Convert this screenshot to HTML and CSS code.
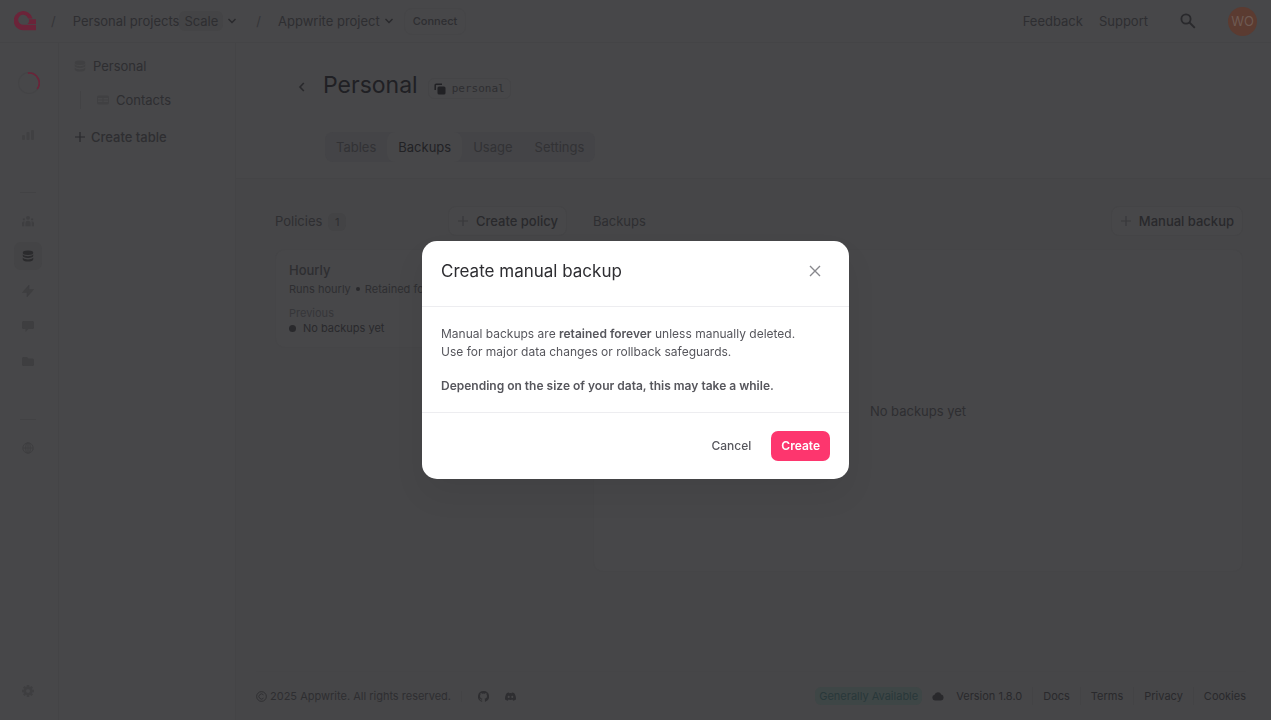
FILE: index.html
```html
<!DOCTYPE html>
<html lang="en">
<head>
<meta charset="utf-8">
<title>Backups - Personal - Appwrite</title>
<link rel="stylesheet" href="styles.css">
</head>
<body>
<svg class="defs" aria-hidden="true">
  <symbol id="database" viewBox="0 0 16 16"><ellipse cx="8" cy="3.6" rx="7" ry="2.9"/><path d="M1 6c1.500 1.600 4 2.200 7 2.200S13.500 7.600 15 6v1.800c0 1.700-3 3-7 3s-7-1.300-7-3zM1 10.300c1.500 1.600 4 2.200 7 2.200s5.500-.6 7-2.200v1.900c0 1.800-3 3.100-7 3.100s-7-1.300-7-3.100z"/></symbol>
  <symbol id="chevron" viewBox="0 0 10 10"><path d="M1.500 3l3.500 3.500L8.500 3" fill="none" stroke="currentColor" stroke-width="1.400"/></symbol>
  <symbol id="plus" viewBox="0 0 12 12"><path d="M6 1v10M1 6h10" fill="none" stroke="currentColor" stroke-width="1.200"/></symbol>
</svg>
<div class="app">
  <header class="topbar">
    <a class="logo" href="#" aria-label="Appwrite"><svg viewBox="0 0 22 20"><path d="M22 13.700V19.300H9.700A9.600 9.600 0 1 1 18.600 7.400H14A5 5 0 1 0 9.700 13.700Z"/><path d="M15 8.200H22v4.700h-8.400a5 5 0 0 0 1.400-4.700z"/></svg></a>
    <span class="slash">/</span>
    <button class="crumb" type="button">Personal projects <span class="plan">Scale</span><svg class="chev"><use href="#chevron"/></svg></button>
    <span class="slash second">/</span>
    <button class="crumb project" type="button">Appwrite project<svg class="chev"><use href="#chevron"/></svg></button>
    <button class="connect" type="button">Connect</button>
    <nav class="top-actions">
      <button type="button">Feedback</button>
      <button type="button">Support</button>
      <button class="search" type="button" aria-label="Search"><svg viewBox="0 0 16 16"><circle cx="6" cy="6" r="4.600"/><path d="M9.500 9.500l5.300 5.300"/></svg></button>
      <button class="avatar" type="button">WO</button>
    </nav>
  </header>

  <nav class="rail" aria-label="Project">
    <svg class="spinner" viewBox="0 0 20 20"><circle cx="10" cy="10" r="9.500"/><path d="M9 1a9.200 9.200 0 0 1 8.500 14.500"/></svg>
    <a class="overview" href="#" aria-label="Overview"><svg viewBox="0 0 12 12"><rect x="0" y="6" width="3" height="5" rx="1"/><rect x="4.500" y="3" width="3" height="8" rx="1"/><rect x="9" y="1" width="3" height="10" rx="1"/></svg></a>
    <hr class="rule-build">
    <div class="rail-group">
      <a href="#" aria-label="Auth"><svg viewBox="0 0 14 12"><circle cx="7" cy="2.300" r="2.200"/><circle cx="2.200" cy="4" r="1.300"/><circle cx="11.800" cy="4" r="1.300"/><path d="M4 12V8.800a3 3 0 0 1 6 0V12zM0 12V8.500C0 7 1.500 6.300 3 6.700 2.500 8 2.600 10 2.600 12zM14 12V8.500c0-1.500-1.500-2.200-3-1.800.5 1.300.4 3.300.4 5.300z"/></svg></a>
      <a class="active" href="#" aria-label="Databases"><svg><use href="#database"/></svg></a>
      <a href="#" aria-label="Functions"><svg viewBox="0 0 12 12"><path d="M7 0v4.500h4.500L5 12V7.500H.5z" stroke="currentColor" stroke-width=".6" stroke-linejoin="round"/></svg></a>
      <a href="#" aria-label="Messaging"><svg viewBox="0 0 12 12"><path d="M1.500 1h9A1.500 1.500 0 0 1 12 2.500v5A1.500 1.500 0 0 1 10.500 9H6.300L3.500 12V9h-2A1.500 1.500 0 0 1 0 7.500v-5A1.500 1.500 0 0 1 1.500 1z"/></svg></a>
      <a href="#" aria-label="Storage"><svg viewBox="0 0 12 12"><path d="M1.500 2H5l1.500 1.400h4A1.500 1.500 0 0 1 12 4.900v4.600a1.500 1.500 0 0 1-1.500 1.500h-9A1.500 1.500 0 0 1 0 9.500v-6A1.500 1.500 0 0 1 1.500 2z"/></svg></a>
    </div>
    <hr class="rule-deploy">
    <a class="sites" href="#" aria-label="Sites"><svg viewBox="0 0 12 12" class="line"><circle cx="6" cy="6" r="5.200"/><ellipse cx="6" cy="6" rx="2.300" ry="5.200"/><path d="M1 6h10M6 1v10"/></svg></a>
    <a class="settings" href="#" aria-label="Settings"><svg viewBox="0 0 12 12" class="gear"><circle cx="6" cy="6" r="3.200"/><path d="M6 0v2M6 10v2M0 6h2M10 6h2M1.800 1.800l1.400 1.400M8.800 8.800l1.400 1.400M10.200 1.800L8.800 3.200M3.200 8.800l-1.400 1.400"/></svg></a>
  </nav>

  <aside class="tree">
    <a href="#"><svg class="tree-icon"><use href="#database"/></svg>Personal</a>
    <a class="child" href="#"><svg class="tree-icon" viewBox="0 0 12 12"><path fill-rule="evenodd" d="M2 1.500h8a2 2 0 0 1 2 2v5a2 2 0 0 1-2 2H2a2 2 0 0 1-2-2v-5a2 2 0 0 1 2-2zM1 4v1.500h4.500V4zm5.500 0v1.500H11V4zM1 6.500V8h4.500V6.500zm5.500 0V8H11V6.500z"/></svg>Contacts</a>
    <button class="create-table" type="button"><svg><use href="#plus"/></svg>Create table</button>
  </aside>

  <main>
    <section class="heading">
      <div class="title-row">
        <a class="back" href="#" aria-label="Back"><svg viewBox="0 0 10 10"><path d="M6.800 1L3 5l3.800 4"/></svg></a>
        <h1>Personal</h1>
        <button class="id-chip" type="button"><svg viewBox="0 0 12 12"><path d="M1.200 7V2.200a1 1 0 0 1 1-1H8" fill="none" stroke="currentColor" stroke-width="1.500"/><rect x="3.500" y="3.500" width="8" height="8" rx="1.500"/></svg>personal</button>
      </div>
      <nav class="tabs"><a href="#">Tables</a><a class="selected" href="#">Backups</a><a href="#">Usage</a><a href="#">Settings</a></nav>
    </section>
    <div class="columns">
      <section class="policies">
        <div class="section-head"><h2>Policies <span class="count">1</span></h2><button class="outlined" type="button"><svg><use href="#plus"/></svg>Create policy</button></div>
        <article class="policy">
          <h3>Hourly</h3>
          <p>Runs hourly<i class="dot"></i>Retained forever</p>
          <p class="previous">Previous</p>
          <p class="status"><i class="status-dot"></i>No backups yet</p>
        </article>
      </section>
      <section class="backups">
        <div class="section-head"><h2>Backups</h2><button class="outlined" type="button"><svg><use href="#plus"/></svg>Manual backup</button></div>
        <div class="empty">No backups yet</div>
      </section>
    </div>
    <footer>
      <span class="copyright"><svg viewBox="0 0 12 12"><circle cx="6" cy="6" r="5.300"/><path d="M8.200 4.300a2.800 2.800 0 1 0 0 3.400"/></svg>2025 Appwrite. All rights reserved.</span>
      <span class="social">
        <a href="#" aria-label="GitHub"><svg viewBox="0 0 16 16"><path d="M8 0a8 8 0 0 0-2.500 15.600c.4.100.5-.2.500-.4v-1.500c-2.200.5-2.700-1-2.700-1-.4-.9-.9-1.200-.9-1.200-.7-.5.1-.5.100-.5.800.1 1.200.8 1.200.8.700 1.300 1.900.9 2.300.7.100-.5.300-.9.500-1.100-1.800-.2-3.600-.9-3.600-4 0-.9.300-1.600.8-2.200-.1-.2-.4-1 .1-2.100 0 0 .7-.2 2.200.8a7.700 7.700 0 0 1 4 0c1.500-1 2.200-.8 2.200-.8.500 1.100.2 1.900.1 2.100.5.600.8 1.300.8 2.200 0 3.100-1.800 3.800-3.600 4 .3.300.6.800.6 1.500v2.300c0 .2.100.5.500.4A8 8 0 0 0 8 0z"/></svg></a>
        <a href="#" aria-label="Discord"><svg viewBox="0 0 16 16"><path fill-rule="evenodd" d="M13.500 3.300A13 13 0 0 0 10.300 2l-.6 1.200a12 12 0 0 0-3.500 0L5.700 2c-1.200.2-2.300.7-3.200 1.300C.5 6.300-.1 9.300.100 12.300c1.400 1 2.700 1.600 4 1.900l1-1.800c2 .7 3.900.7 5.800 0l1 1.800c1.300-.3 2.600-.9 4-1.900.3-3.500-.6-6.400-2.400-9zM5.300 10.200c-.8 0-1.400-.7-1.400-1.600S4.500 7 5.300 7s1.500.7 1.400 1.600c0 .9-.6 1.600-1.400 1.600zm5.300 0c-.8 0-1.400-.7-1.400-1.600S9.800 7 10.600 7 12.100 7.700 12 8.600c0 .9-.6 1.600-1.400 1.600z"/></svg></a>
      </span>
      <nav class="foot-links">
        <span class="badge">Generally Available</span>
        <a class="version" href="#"><svg viewBox="0 0 12 10"><path d="M3 9.500A2.900 2.900 0 0 1 2.500 3.800 3.600 3.600 0 0 1 9.300 3.600 3 3 0 0 1 9 9.500z"/></svg>Version 1.8.0</a>
        <a href="#">Docs</a><a href="#">Terms</a><a href="#">Privacy</a><a href="#">Cookies</a>
      </nav>
    </footer>
  </main>
</div>

<div class="overlay">
  <div class="modal" role="dialog" aria-modal="true" aria-labelledby="modal-title">
    <header><h2 id="modal-title">Create manual backup</h2><button class="close" type="button" aria-label="Close"><svg viewBox="0 0 12 12"><path d="M1 1l10 10M11 1L1 11"/></svg></button></header>
    <div class="modal-body">
      <p>Manual backups are <b>retained forever</b> unless manually deleted.<br>Use for major data changes or rollback safeguards.</p>
      <p><b>Depending on the size of your data, this may take a while.</b></p>
    </div>
    <div class="modal-actions"><button class="cancel" type="button">Cancel</button><button class="create" type="button">Create</button></div>
  </div>
</div>
</body>
</html>
```
FILE: styles.css
```css
* { box-sizing: border-box; }
body {
  --panel: #474749;
  --canvas: #464648;
  --line: #444446;
  --text: #2e2e31;
  --strong: #29292c;
  margin: 0;
  padding-right: 9px;
  background: #fff;
  color: var(--text);
  font: 13px/18px Inter, "Liberation Sans", sans-serif;
}
h1, h2, h3, p { margin: 0; font-size: 13px; font-weight: 400; }
a { color: inherit; text-decoration: none; }
button { padding: 0; border: 0; background: none; color: inherit; font: inherit; }
svg { display: block; flex: none; fill: currentColor; }
.defs { position: absolute; width: 0; height: 0; }

.app {
  display: grid;
  grid-template: 43px 1fr / 59px 177px 1fr;
  min-height: 100vh;
  background: var(--panel);
}
.topbar {
  grid-column: 1 / -1;
  display: flex;
  align-items: center;
  padding: 0 14px;
  border-bottom: 1px solid var(--line);
}
.logo { color: #6b2439; }
.logo svg { width: 22px; height: 20px; }
.slash { margin: 0 17px 0 15px; color: #353538; }
.crumb { display: flex; align-items: center; }
.plan { padding: 1px 5px; border-radius: 6px; background: #444446; }
.chev { width: 10px; height: 10px; margin-left: 4px; color: var(--strong); }
.second { margin: 0 17px 0 19px; }
.connect {
  height: 27px;
  margin-left: 10px;
  padding: 0 8px;
  border: 1px solid #454547;
  border-radius: 8px;
  font-size: 11px;
  font-weight: 500;
}
.top-actions { display: flex; align-items: center; gap: 16px; margin-left: auto; }
.search { margin: 0 16px; color: var(--strong); }
.search svg { width: 16px; height: 16px; fill: none; stroke: currentColor; stroke-width: 1.8; }
.avatar { width: 29px; height: 29px; border-radius: 50%; background: #5b3b31; color: #6e5a53; }

.rail {
  display: flex;
  flex-direction: column;
  align-items: center;
  padding: 29px 2px 15px 0;
  border-right: 1px solid var(--line);
  color: #3e3e40;
}
.rail a { display: grid; place-items: center; width: 28px; height: 28px; border-radius: 7px; }
.rail a svg { width: 12px; height: 12px; }
.rail hr { width: 16px; margin: 0; border: 0; border-top: 1px solid #424244; }
.spinner { width: 22px; height: 22px; margin-left: 2px; fill: none; stroke: #444446; }
.spinner path { stroke: #6b2439; stroke-width: 1.5; }
.rail .overview { margin-top: 27px; }
.rail .overview svg, .tree .tree-icon { color: #404042; }
.rail .rule-build { margin: 43px 0 14px; }
.rail-group { display: flex; flex-direction: column; gap: 7px; }
.rail .active { background: #444446; color: #2b2b2d; }
.rail .rule-deploy { margin: 44px 0 14px; }
.line { fill: none; stroke: currentColor; }
.rail .settings { margin-top: auto; }
.gear { fill: none; stroke: currentColor; stroke-width: 2.4; }

.tree {
  display: flex;
  flex-direction: column;
  align-items: flex-start;
  padding: 14px 15px;
  border-right: 1px solid var(--line);
}
.tree a { display: flex; align-items: center; gap: 7px; }
.tree-icon { width: 12px; height: 12px; }
.tree .child { margin: 16px 0 0 6px; padding-left: 16px; border-left: 1px solid #424244; }
.create-table { display: flex; align-items: center; gap: 5px; margin-top: 19px; font-weight: 500; }
.create-table svg { width: 12px; height: 12px; color: var(--strong); }

main { display: flex; flex-direction: column; background: var(--canvas); }
.heading { padding: 25px 29px 16px 61px; background: var(--panel); border-bottom: 1px solid var(--line); }
.title-row { display: flex; align-items: center; }
.back { margin: 3px 16px 0 0; }
.back svg { width: 10px; height: 12px; fill: none; stroke: var(--strong); stroke-width: 1.6; }
h1 { font-size: 23px; line-height: 34px; color: #202024; }
.id-chip {
  display: flex;
  align-items: center;
  gap: 6px;
  height: 21px;
  margin: 7px 0 0 10px;
  padding: 0 5px;
  border: 1px solid #444446;
  border-radius: 6px;
  font: 11px/16px "DejaVu Sans Mono", monospace;
}
.id-chip svg { width: 12px; height: 12px; color: #212124; }
.tabs { display: inline-flex; margin: 30px 0 0 28px; border-radius: 8px; background: #444447; }
.tabs a { padding: 6px 11px; border-radius: 8px; color: #323235; }
.tabs .selected { background: var(--panel); color: #222225; }

.columns { display: grid; grid-template-columns: 292px 1fr; gap: 26px; padding: 27px 28px 0 39px; }
.section-head { display: flex; justify-content: space-between; align-items: center; height: 30px; margin-bottom: 13px; }
.count { margin-left: 2px; padding: 2px 7px; border-radius: 6px; background: #434345; font-size: 11px; }
.outlined {
  display: flex;
  align-items: center;
  gap: 7px;
  height: 30px;
  padding: 0 8px;
  border: 1px solid #444446;
  border-radius: 8px;
  background: #474749;
  color: var(--strong);
  font-weight: 500;
}
.outlined svg { width: 12px; height: 12px; color: #38383b; }
.policy, .empty { border: 1px solid #454547; border-radius: 10px; background: #474749; }
.policy { padding: 11px 13px; font-size: 11px; line-height: 15px; }
.policy h3 { line-height: 18px; font-weight: 500; margin-bottom: 3px; }
.policy p { font-size: 11px; }
.dot, .status-dot { display: inline-block; border-radius: 50%; background: var(--strong); }
.dot { width: 4px; height: 4px; margin: 0 5px 2px; }
.policy .previous { margin-top: 9px; color: #363639; }
.status { color: var(--strong); }
.status-dot { width: 7px; height: 7px; margin-right: 7px; }
.empty { display: grid; place-items: center; min-height: 323px; }

footer {
  display: flex;
  align-items: center;
  height: 49px;
  margin: auto 25px 0 20px;
  border-top: 1px solid #454547;
  font-size: 11px;
}
.copyright { display: flex; align-items: center; gap: 3px; }
.copyright svg { width: 11px; height: 11px; fill: none; stroke: currentColor; }
.social { display: flex; gap: 16px; margin-left: 10px; padding-left: 16px; border-left: 1px solid #434345; }
.social svg { width: 11px; height: 11px; }
.foot-links { display: flex; align-items: center; gap: 10px; margin-left: auto; color: var(--strong); }
.badge { padding: 0 4px; border-radius: 6px; background: #3e4646; color: #29383a; }
.version { display: flex; align-items: center; gap: 12px; }
.version svg { width: 12px; height: 10px; }
.version ~ a { padding-left: 10px; border-left: 1px solid #434345; }

.overlay { position: fixed; inset: 0 9px 0 0; display: grid; place-items: center; }
.modal {
  width: 427px;
  border-radius: 15px;
  background: #fff;
  box-shadow: 0 16px 32px rgb(0 0 0 / 6%);
  color: #56565c;
}
.modal header { display: flex; justify-content: space-between; padding: 19px 28px 24px 19px; }
.modal h2 { font-size: 17px; line-height: 22px; color: #2d2d31; }
.close { display: grid; place-items: center; height: 22px; color: #88888d; }
.close svg { width: 12px; height: 12px; stroke: currentColor; stroke-width: 1.4; }
.modal-body { padding: 18px 19px 17px; border: solid #ededf0; border-width: 1px 0; }
.modal-body p { font-size: 12px; }
.modal-body p + p { margin-top: 16px; }
.modal b { font-weight: 600; }
.modal-actions { display: flex; justify-content: flex-end; gap: 10px; padding: 18px 19px; font-size: 12px; }
.modal-actions button { height: 30px; padding: 0 10px; border-radius: 7px; font-weight: 500; }
.modal-actions .create { background: #fd366e; color: #fff; font-weight: 600; }
```
